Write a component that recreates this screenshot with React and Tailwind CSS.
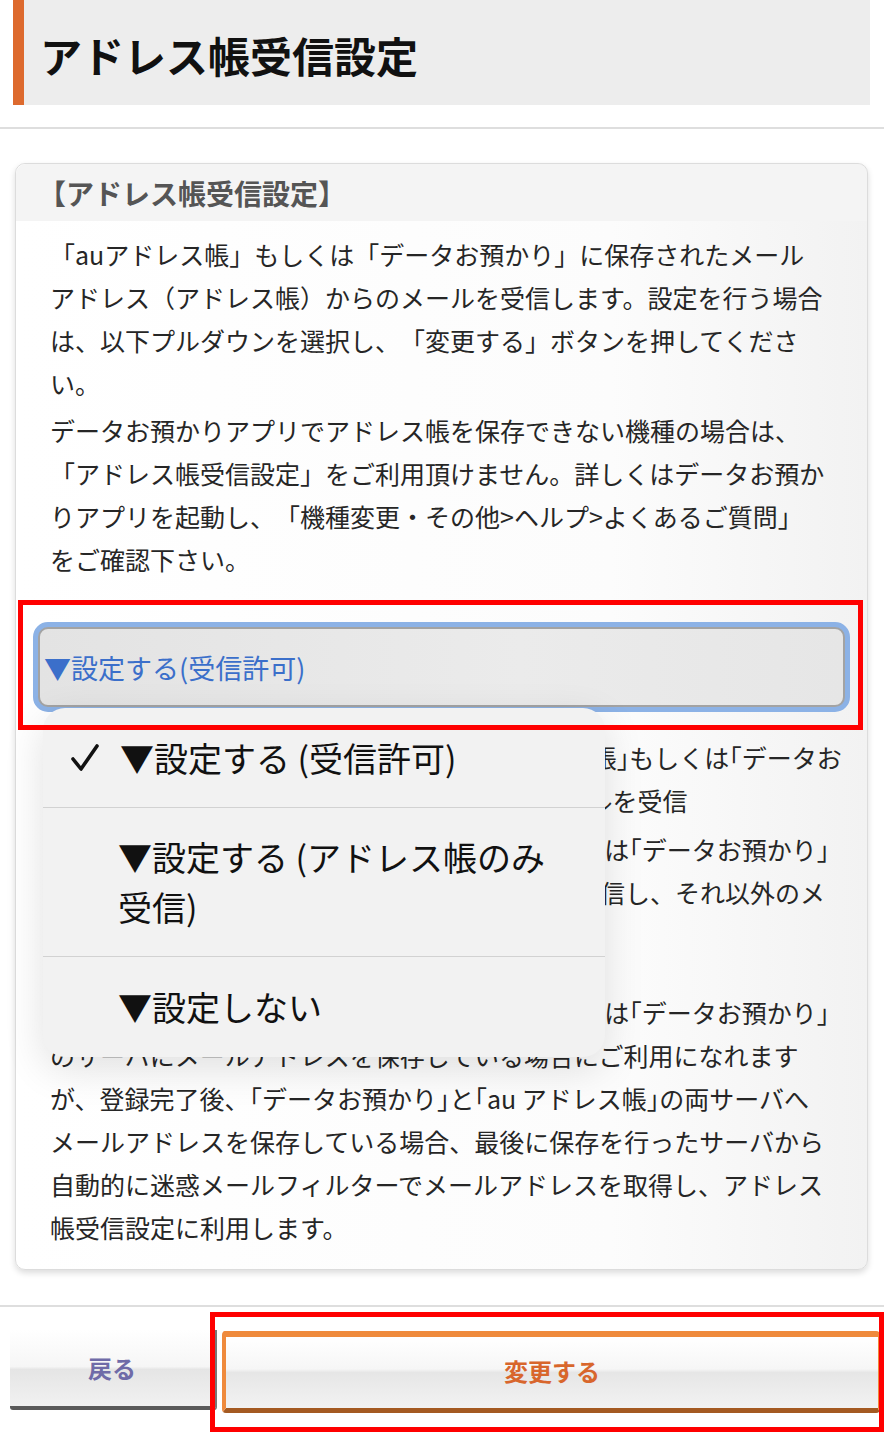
const jp = { fontFamily: '"Noto Sans CJK JP", "Noto Sans", sans-serif' }

const CheckMark = () => (
    <svg width="30" height="30" viewBox="0 0 30 30" className="shrink-0">
        <path d="M3 16 L11 26 L27 3" fill="none" stroke="#111" strokeWidth="3.6" strokeLinecap="round" strokeLinejoin="round" />
    </svg>
)

const SelectWithMenu = () => (
    <div className="relative z-10 -mx-[17px] mt-[41px]">
        <div className="h-[90px] rounded-[15px] border-[5px] border-[#8cb2e6] bg-[#8cb2e6]">
            <div className="h-full rounded-[10px] border-2 border-[#a3a3a3] bg-[linear-gradient(to_right,#e3e3e3,#ebebeb_60%,#e6e6e6)] flex items-center pl-[4px]">
                <span className="text-[27px] text-[#3b6fca]">▼設定する(受信許可)</span>
            </div>
        </div>

        {/* iOS picker popover */}
        <div className="absolute left-[10px] top-[86px] w-[562px] rounded-[22px] bg-[#f2f2f2] shadow-[0_12px_40px_rgba(0,0,0,0.12)] text-[34px] text-[#111]">
            <div className="h-[99px] flex items-center pl-[27px] gap-[20px]">
                <CheckMark />
                <span>▼設定する (受信許可)</span>
            </div>
            <div className="h-px bg-[#d2d2d2]" />
            <div className="h-[148px] pl-[75px] pt-[24px] leading-[50px]">
                ▼設定する (アドレス帳のみ<br />受信)
            </div>
            <div className="h-px bg-[#d2d2d2]" />
            <div className="h-[100px] flex items-center pl-[75px] pb-[2px]">▼設定しない</div>
        </div>

        {/* highlight */}
        <div className="absolute -left-[15px] -top-[22px] -right-[13px] -bottom-[18px] border-[5px] border-[#ff0000] z-20 pointer-events-none" />
    </div>
)

export default function App() {
    return (
        <div className="relative w-[884px] min-h-[1441px] bg-white overflow-hidden [text-spacing-trim:space-all]" style={jp}>
            <div className="ml-[13px] mr-[14px] h-[105px] bg-[#ededed] border-l-[11px] border-[#dd6a2e] flex items-center pl-[16px] pt-[4px]">
                <h1 className="text-[42px] font-bold text-[#111]">アドレス帳受信設定</h1>
            </div>
            <div className="mt-[22px] h-[2px] bg-[#dedede]" />

            <section className="mt-[34px] mx-[15px] mr-[16px] rounded-[10px] border border-[#dcdcdc] shadow-[0_3px_6px_rgba(0,0,0,0.14)] bg-[linear-gradient(to_right,#ffffff,#fcfcfc_70%,#f2f2f2)]">
                <div className="h-[57px] bg-[#f4f4f4] rounded-t-[10px] flex items-center pl-[22px]">
                    <p className="text-[28px] font-bold text-[#555]">【アドレス帳受信設定】</p>
                </div>

                <div className="px-[34px] pt-[12px] pb-[20px] text-[25px] leading-[43px] text-[#262626] whitespace-nowrap">
                    <p>
                        「auアドレス帳」もしくは「データお預かり」に保存されたメール<br />
                        アドレス（アドレス帳）からのメールを受信します。設定を行う場合<br />
                        は、以下プルダウンを選択し、「変更する」ボタンを押してくださ<br />
                        い。
                    </p>
                    <p className="mt-[4px]">
                        データお預かりアプリでアドレス帳を保存できない機種の場合は、<br />
                        「アドレス帳受信設定」をご利用頂けません。詳しくはデータお預か<br />
                        りアプリを起動し、「機種変更・その他&gt;ヘルプ&gt;よくあるご質問」<br />
                        をご確認下さい。
                    </p>

                    <SelectWithMenu />

                    <p className="mt-[24px]">
                        受信許可を選択した場合は、全ての｢auアドレス帳｣もしくは｢データお<br />
                        預かり｣に保存されたメールアドレスからのメールを受信
                    </p>
                    <p className="mt-[6px]">
                        アドレス帳のみ受信する：｢auアドレス帳｣もしくは｢データお預かり｣<br />
                        に保存されたメールアドレスからのメールのみ受信し、それ以外のメ<br />
                        ールは受信しません。
                    </p>
                    <p className="mt-[34px]">
                        ※この設定は、お客さまが｢auアドレス帳｣もしくは｢データお預かり｣<br />
                        のサーバにメールアドレスを保存している場合にご利用になれます<br />
                        が、登録完了後、｢データお預かり｣と｢au アドレス帳｣の両サーバへ<br />
                        メールアドレスを保存している場合、最後に保存を行ったサーバから<br />
                        自動的に迷惑メールフィルターでメールアドレスを取得し、アドレス<br />
                        帳受信設定に利用します。
                    </p>
                </div>
            </section>

            <div className="mt-[35px] h-[2px] bg-[#dedede]" />

            <div className="flex mt-[23px] pl-[10px] pr-[4px] gap-[5px]">
                <button className="w-[207px] h-[80px] rounded-b-[3px] border-b-[4px] border-r-[3px] border-b-[#5a5a5a] border-r-[#777] bg-[linear-gradient(to_bottom,#ffffff_0%,#f6f6f6_48%,#e5e5e5_52%,#f1f1f1_100%)] text-[24px] font-bold text-[#6f6ba8]">
                    戻る
                </button>
                <div className="relative flex-1 mt-[1px]">
                    <button className="w-full h-[82px] rounded-[4px] border-t-[6px] border-l-[4px] border-r-[2px] border-b-[5px] border-t-[#ef8a3c] border-l-[#ef8a3c] border-r-[#ef8a3c] border-b-[#a45a22] bg-[linear-gradient(to_bottom,#ffffff_0%,#f6f6f6_45%,#e6e6e6_50%,#f2f2f2_100%)] text-[24px] font-bold text-[#d8662c] pb-[4px]">
                        変更する
                    </button>
                    <div className="absolute -left-[12px] -top-[19px] -right-[4px] -bottom-[19px] border-[5px] border-[#ff0000] pointer-events-none" />
                </div>
            </div>
        </div>
    )
}
